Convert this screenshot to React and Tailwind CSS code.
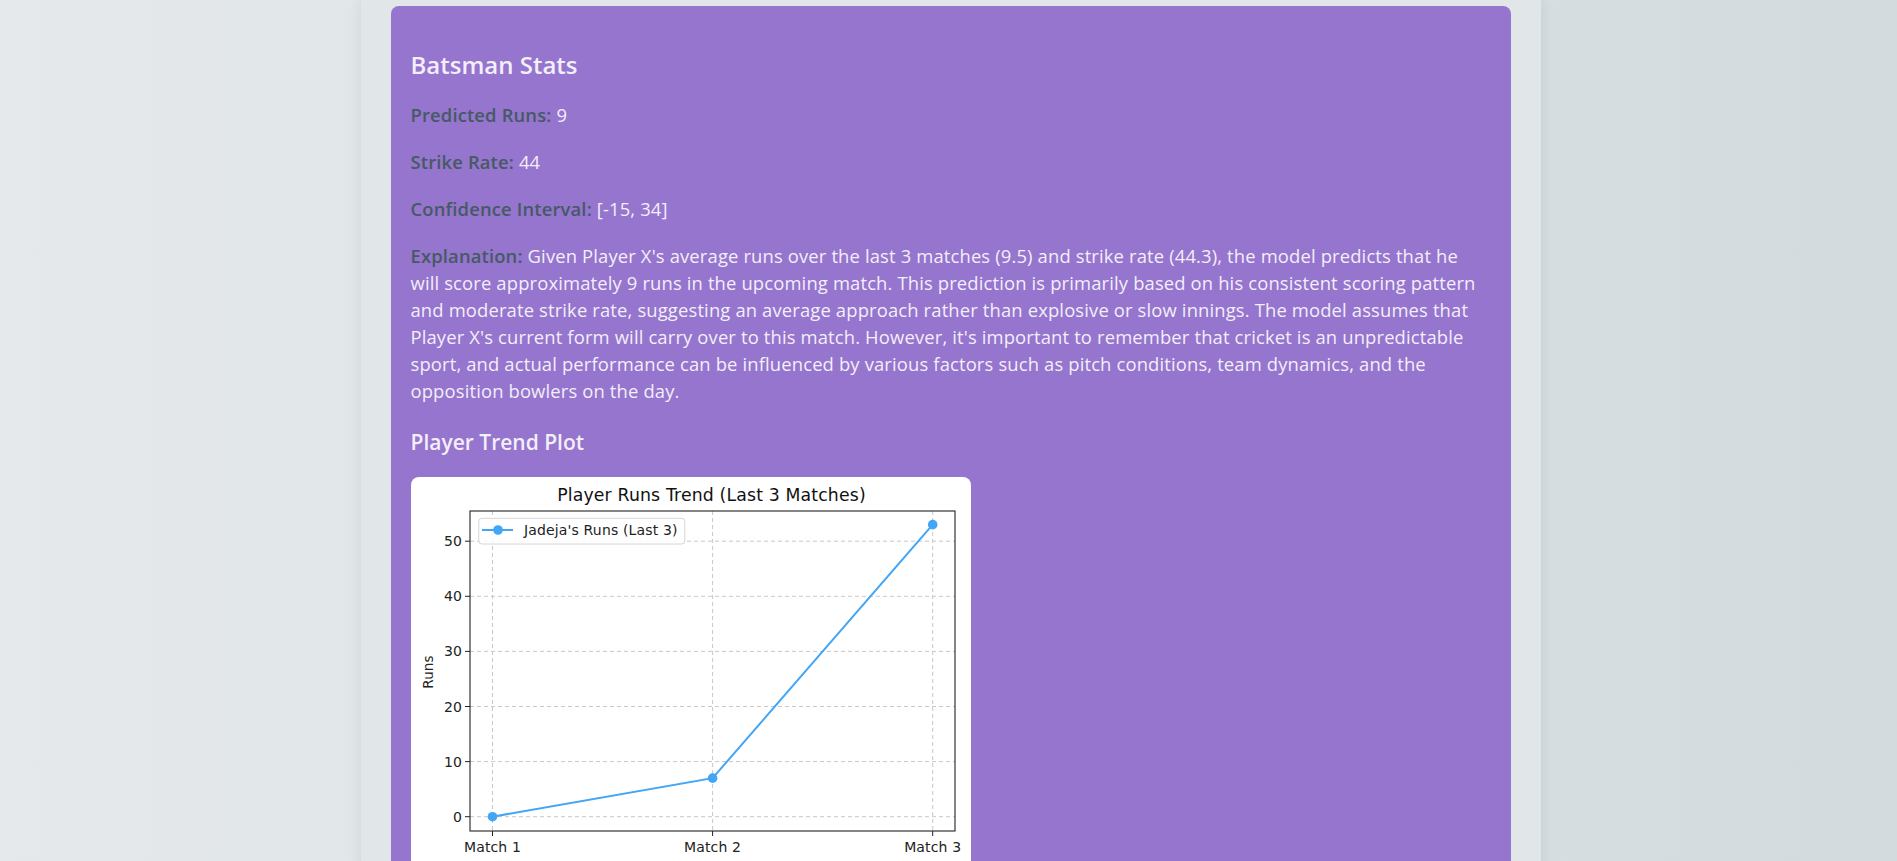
import React from "react";

const stats = [
  { label: "Predicted Runs:", value: "9" },
  { label: "Strike Rate:", value: "44" },
  { label: "Confidence Interval:", value: "[-15, 34]" },
];

// kept as the lines the card shows them
const explanationLines = [
  "Given Player X's average runs over the last 3 matches (9.5) and strike rate (44.3), the model predicts that he",
  "will score approximately 9 runs in the upcoming match. This prediction is primarily based on his consistent scoring pattern",
  "and moderate strike rate, suggesting an average approach rather than explosive or slow innings. The model assumes that",
  "Player X's current form will carry over to this match. However, it's important to remember that cricket is an unpredictable",
  "sport, and actual performance can be influenced by various factors such as pitch conditions, team dynamics, and the",
  "opposition bowlers on the day.",
];

// chart geometry (px inside the plot image)
const axes = { left: 59, right: 544, top: 34, bottom: 354 };
const xs = [81.5, 301.6, 521.7];
const runs = [0, 7, 53];
const yOf = (v) => 339.7 - v * 5.51;

const TrendChart = () => {
  const pts = runs.map((r, i) => [xs[i], yOf(r)]);
  const font = "DejaVu Sans, Verdana, sans-serif";
  return (
    <svg width="560" height="400" viewBox="0 0 560 400" className="block">
      <text x="300.5" y="24" textAnchor="middle" fontFamily={font} fontSize="17.3" fill="#111">
        Player Runs Trend (Last 3 Matches)
      </text>

      {/* grid */}
      {[0, 10, 20, 30, 40, 50].map((v) => (
        <line key={"h" + v} x1={axes.left} x2={axes.right} y1={yOf(v)} y2={yOf(v)} stroke="#c8c8c8" strokeWidth="1" strokeDasharray="4 3" />
      ))}
      {xs.map((x) => (
        <line key={"v" + x} x1={x} x2={x} y1={axes.top} y2={axes.bottom} stroke="#c8c8c8" strokeWidth="1" strokeDasharray="4 3" />
      ))}

      {/* series */}
      <polyline points={pts.map((p) => p.join(",")).join(" ")} fill="none" stroke="#42a5f5" strokeWidth="2" />
      {pts.map(([x, y]) => (
        <circle key={x} cx={x} cy={y} r="4.8" fill="#42a5f5" />
      ))}

      {/* frame */}
      <rect x={axes.left} y={axes.top} width={axes.right - axes.left} height={axes.bottom - axes.top} fill="none" stroke="#222" strokeWidth="1.1" />

      {/* y ticks */}
      {[0, 10, 20, 30, 40, 50].map((v) => (
        <g key={"yt" + v}>
          <line x1={axes.left - 5} x2={axes.left} y1={yOf(v)} y2={yOf(v)} stroke="#222" strokeWidth="1" />
          <text x={axes.left - 8} y={yOf(v) + 5} textAnchor="end" fontFamily={font} fontSize="14" fill="#222">
            {v}
          </text>
        </g>
      ))}

      {/* x ticks */}
      {xs.map((x, i) => (
        <g key={"xt" + i}>
          <line x1={x} x2={x} y1={axes.bottom} y2={axes.bottom + 5} stroke="#222" strokeWidth="1" />
          <text x={x} y={375} textAnchor="middle" fontFamily={font} fontSize="14" fill="#222">
            Match {i + 1}
          </text>
        </g>
      ))}

      <text transform="translate(21.5 195) rotate(-90)" textAnchor="middle" fontFamily={font} fontSize="13.5" fill="#222">
        Runs
      </text>

      {/* legend */}
      <rect x="67.8" y="41.3" width="206" height="25.7" rx="3" fill="#fff" fillOpacity="0.85" stroke="#d6d6d6" strokeWidth="1" />
      <line x1="71" x2="102" y1="53" y2="53" stroke="#42a5f5" strokeWidth="2" />
      <circle cx="87" cy="53" r="4.8" fill="#42a5f5" />
      <text x="113" y="58" fontFamily={font} fontSize="14" fill="#222">
        Jadeja's Runs (Last 3)
      </text>
    </svg>
  );
};

export default function App() {
  return (
    <div className="min-h-screen bg-gradient-to-r from-[#e5e9ec] to-[#d3dbde] font-['Open_Sans',sans-serif]">
      <div className="mx-auto w-[1180px] min-h-screen translate-x-[2px] bg-[#e1e6e9] px-[30px] pt-[6px] shadow-[0_0_14px_rgba(0,0,0,0.08)]">
        <div className="rounded-lg bg-[#9575cd] px-5 pt-5 pb-8 text-[18.4px] leading-[27px] tracking-[0.15px] text-[#f3eef9]">
          <h2 className="mt-6 mb-[22px] text-[24px] leading-[29px] font-semibold tracking-normal">Batsman Stats</h2>

          {stats.map((s) => (
            <p key={s.label} className="mb-5">
              <span className="font-semibold text-[#455a64]">{s.label}</span> {s.value}
            </p>
          ))}

          <p>
            <span className="font-semibold text-[#455a64]">Explanation:</span>{" "}
            {explanationLines.map((line, i) => (
              <React.Fragment key={i}>
                {line}
                {i < explanationLines.length - 1 && <br />}
              </React.Fragment>
            ))}
          </p>

          <h3 className="mt-[26px] mb-[22px] text-[21px] leading-[25px] font-semibold tracking-normal">Player Trend Plot</h3>

          <div className="w-[560px] overflow-hidden rounded-lg bg-white">
            <TrendChart />
          </div>
        </div>
      </div>
    </div>
  );
}
